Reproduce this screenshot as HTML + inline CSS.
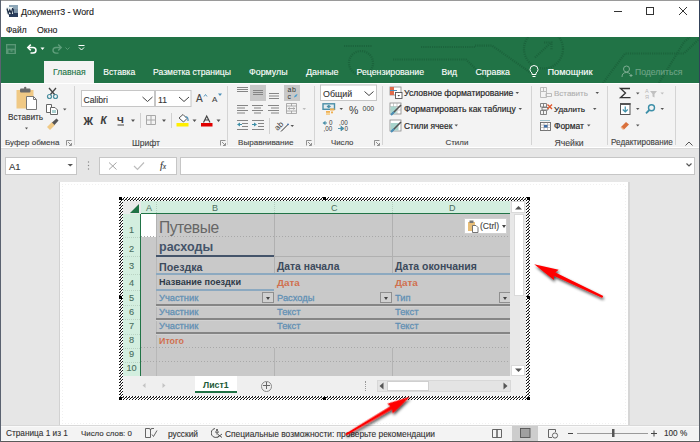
<!DOCTYPE html>
<html><head><meta charset="utf-8">
<style>
*{margin:0;padding:0;box-sizing:border-box}
html,body{width:700px;height:442px;overflow:hidden;background:#e6e6e6;font-family:"Liberation Sans",sans-serif;color:#262626}
.a{position:absolute}
.t{position:absolute;white-space:nowrap;line-height:1;-webkit-text-stroke:0.12px currentColor}
.bs{-webkit-text-stroke:0.18px currentColor}
#title{left:0;top:0;width:700px;height:37px;background:#fff}
#green{left:0;top:37px;width:700px;height:46px;background:#217346}
#ribbon{left:0;top:83px;width:700px;height:65px;background:#f3f3f3;border-top:1px solid #fff;border-bottom:1px solid #fff}
#fbar{left:0;top:148px;width:700px;height:34px;background:#e6e6e6;border-top:1px solid #d9d9d9}
#page{left:60px;top:182px;width:568px;height:243px;background:#fff}
#status{left:0;top:425px;width:700px;height:17px;background:#f3f3f3;border-top:1px solid #d9d9d9}
.tab{font-size:8.6px;color:#fff}
.rb{font-size:8.6px;color:#262626}
.grp{font-size:8.6px;color:#444}
.sep{position:absolute;width:1px;background:#d4d4d4}
.box{position:absolute;background:#fff;border:1px solid #c6c6c6}
.dd{position:absolute;width:0;height:0;border-left:2.5px solid transparent;border-right:2.5px solid transparent;border-top:3px solid #555}
.rh{left:123px;width:17px;text-align:center;font-size:9.2px;color:#4a6e60}
.hl{left:141px;width:369px;height:1px;background:repeating-linear-gradient(90deg,#a8a8a8 0 1px,transparent 1px 3px)}
.cb{font-size:9.3px;color:#6290b4;-webkit-text-stroke:0.3px currentColor}
.ddb{width:12px;height:11px;background:#d0d0d0;border:1px solid #8f8f8f}
.ddb::after{content:"";position:absolute;left:3px;top:4px;border-left:2.5px solid transparent;border-right:2.5px solid transparent;border-top:3px solid #444}
.hd{width:3px;height:3px;background:#000}
.st{font-size:8px;color:#333}
.ns{-webkit-text-stroke:0}
</style></head><body>
<!-- title bar -->
<div id="title" class="a"></div>
<div class="a" style="left:0;top:0;width:700px;height:1px;background:#9a9a9a"></div>
<svg class="a" style="left:5px;top:4px" width="15" height="14" viewBox="5 4 15 14">
<rect x="9" y="5" width="9" height="12" fill="#2a3d5c"/>
<rect x="9" y="5" width="9" height="4" fill="#8ea7b8"/>
<rect x="14" y="9" width="4" height="4" fill="#7f95a8"/>
<rect x="6.5" y="7" width="6.5" height="7" fill="#e8f0f0"/>
<path d="M7 8.5L8.3 13.3L9.8 10L11.3 13.3L12.8 8" fill="none" stroke="#1f2f48" stroke-width="1.3"/>
</svg>
<div class="t" style="left:21px;top:8px;font-size:8.85px;color:#222">Документ3 - Word</div>
<div class="t" style="left:6px;top:25.7px;font-size:8.4px;color:#222">Файл</div>
<div class="t" style="left:37px;top:25.5px;font-size:8.8px;color:#222">Окно</div>
<div class="a" style="left:614px;top:11px;width:8px;height:1px;background:#333"></div>
<div class="a" style="left:646px;top:7px;width:8px;height:8px;border:1px solid #333"></div>
<svg class="a" style="left:679px;top:7px" width="8" height="8"><path d="M0 0L8 8M8 0L0 8" stroke="#333" stroke-width="1"/></svg>

<!-- green band -->
<div id="green" class="a"></div>
<svg class="a" style="left:0;top:37px" width="700" height="46" viewBox="0 37 700 46">
<g fill="none" stroke="#1a5f39" stroke-width="2.2" stroke-dasharray="1.1 1.1" opacity="0.75">
<circle cx="543.5" cy="49" r="19.5"/>
<path d="M535 57.5L551 42.5M544 42.5H551.5V50"/>
<circle cx="361" cy="63" r="12"/>
<path d="M344 46H372"/>
<path d="M393 59.5H466L486 79"/>
<path d="M421 47H475M475 45.6H492L531 73"/>
<path d="M603 83L625 53.5H684L700 38"/>
<path d="M659 83L684 42L690 37"/>
</g>
</svg>
<svg class="a" style="left:529px;top:65px" width="10" height="13" viewBox="0 0 10 13">
<path d="M3 9.5V8Q1 6.5 1 4.5A4 4 0 0 1 9 4.5Q9 6.5 7 8V9.5ZM3.5 11.5H6.5" fill="none" stroke="#fff" stroke-width="1"/>
</svg>
<svg class="a" style="left:621px;top:65px" width="12" height="13" viewBox="0 0 12 13">
<circle cx="5.5" cy="4" r="3" fill="none" stroke="#7fae94" stroke-width="1"/>
<path d="M1 12Q1 7.5 5.5 7.5Q8 7.5 9 9M8.5 10.5H11.5M10 9V12" fill="none" stroke="#7fae94" stroke-width="1"/>
</svg>

<div class="a" style="left:44px;top:61px;width:50px;height:22px;background:#f3f3f3"></div>
<div class="t tab" style="left:53px;top:68px;color:#217346">Главная</div>
<div class="t tab" style="left:103.3px;top:68px">Вставка</div>
<div class="t tab" style="left:153px;top:68px">Разметка страницы</div>
<div class="t tab" style="left:249px;top:68px;font-size:8.9px">Формулы</div>
<div class="t tab" style="left:306px;top:68px;font-size:9px">Данные</div>
<div class="t tab" style="left:356.5px;top:68px;font-size:8.75px">Рецензирование</div>
<div class="t tab" style="left:441.5px;top:68px">Вид</div>
<div class="t tab" style="left:475.5px;top:68px;font-size:8.8px">Справка</div>
<div class="t tab" style="left:547.5px;top:67.8px;font-size:9.2px;-webkit-text-stroke:0.15px #fff">Помощник</div>
<div class="t tab" style="left:635px;top:68px;color:#6fa487">Поделиться</div>

<!-- ribbon -->
<div id="ribbon" class="a"></div>
<div class="t grp" style="left:5px;top:139px;font-size:8px">Буфер обмена</div>
<div class="t grp" style="left:132px;top:139px;font-size:8.5px">Шрифт</div>
<div class="t grp" style="left:238px;top:139px;font-size:8.07px">Выравнивание</div>
<div class="t grp" style="left:331px;top:139px;font-size:7.8px">Число</div>
<div class="t grp" style="left:445.5px;top:139px;font-size:7.95px">Стили</div>
<div class="t grp" style="left:554.5px;top:139px;font-size:8.66px">Ячейки</div>
<div class="t grp" style="left:611px;top:139px;font-size:8.14px">Редактирование</div>
<div class="sep" style="left:74px;top:86px;height:59px"></div>
<div class="sep" style="left:227px;top:86px;height:59px"></div>
<div class="sep" style="left:314px;top:86px;height:59px"></div>
<div class="sep" style="left:382px;top:86px;height:59px"></div>
<div class="sep" style="left:531px;top:86px;height:59px"></div>
<div class="sep" style="left:607px;top:86px;height:59px"></div>
<div class="sep" style="left:675px;top:86px;height:59px"></div>


<svg class="a" style="left:0;top:0" width="700" height="150" viewBox="0 0 700 150">
<!-- QAT -->
<rect x="6" y="44" width="10" height="10" fill="#5a9876"/>
<rect x="7.3" y="45.3" width="7.5" height="3.3" fill="#2c7750"/>
<rect x="8.5" y="50.2" width="6" height="2.8" fill="#2c7750"/>
<rect x="10.5" y="50.2" width="2" height="1.5" fill="#5a9876"/>
<path d="M28 47.5H33A3 2.8 0 0 1 33 53.1H30.5" fill="none" stroke="#fff" stroke-width="1.5"/>
<path d="M30.8 44.6L27.8 47.5L30.8 50.4" fill="none" stroke="#fff" stroke-width="1.5"/>
<path d="M40.5 47.5H44.5L42.5 50Z" fill="#fff"/>
<path d="M61 47.5H56A3 2.8 0 0 0 56 53.1H58.5" fill="none" stroke="#5f9e7b" stroke-width="1.4"/>
<path d="M58.2 44.6L61.2 47.5L58.2 50.4" fill="none" stroke="#5f9e7b" stroke-width="1.4"/>
<path d="M65.5 47.5L67.5 49.5L69.5 47.5" fill="none" stroke="#5f9e7b" stroke-width="0.9"/>
<path d="M78.5 45.5H84.5M79 47.5L81.5 50L84 47.5" fill="none" stroke="#fff" stroke-width="1"/>

<!-- clipboard group -->
<rect x="16.5" y="90" width="17" height="18.5" fill="#f0c985"/>
<rect x="20" y="88.5" width="10.5" height="4" rx="1" fill="#6b6b6b"/>
<circle cx="25.2" cy="88" r="1.2" fill="#6b6b6b"/>
<path d="M26.5 96.5H33.5L36.5 99.5V109.5H26.5Z" fill="#fff" stroke="#777" stroke-width="1"/>
<path d="M33.5 96.5V99.5H36.5" fill="none" stroke="#777" stroke-width="1"/>
<path d="M25 127.5H28L26.5 129.5Z" fill="#555"/>
<!-- scissors -->
<path d="M49 88L55 95M56 88L50 95" stroke="#444" stroke-width="1.3"/>
<circle cx="49.5" cy="96.5" r="2" fill="none" stroke="#4a8fa0" stroke-width="1.2"/>
<circle cx="55.5" cy="96.5" r="2" fill="none" stroke="#4a8fa0" stroke-width="1.2"/>
<!-- copy -->
<path d="M46.5 104.5H51.5V112.5H46.5Z" fill="#fff" stroke="#666"/>
<path d="M50.5 107.5H55L57.5 110V114.5H50.5Z" fill="#fff" stroke="#666"/>
<rect x="52" y="110" width="4" height="3" fill="#a8d0cf"/>
<path d="M63 108.5H66.5L64.75 110.5Z" fill="#555"/>
<!-- format painter -->
<path d="M47 127L52 122L55 125L50 130Z" fill="#f0c985"/>
<path d="M52 122.5L56.5 118.5L58.5 120.5L54.5 125Z" fill="#555"/>
<!-- font group -->
<rect x="81.5" y="90.5" width="73" height="16" fill="#fff" stroke="#c6c6c6"/>
<rect x="155.5" y="90.5" width="35.5" height="16" fill="#fff" stroke="#c6c6c6"/>
<path d="M142.5 97L147.5 101.5L152.5 97M179 97L184 101.5L189 97" fill="none" stroke="#444" stroke-width="1"/>
<path d="M204 96.5L205.5 94.5L207 96.5" fill="none" stroke="#4a8fb8" stroke-width="0.9"/>
<path d="M218 93.5H222L220 96Z" fill="#4a8fb8"/>
<path d="M131 119.5H135L133 122Z M162 119.5H166L164 122Z M192.5 119.5H196.5L194.5 122Z M216.5 119.5H220.5L218.5 122Z" fill="#555"/>
<rect x="140" y="113" width="1" height="15" fill="#d0d0d0"/>
<rect x="171" y="113" width="1" height="15" fill="#d0d0d0"/>
<path d="M146.5 115.5H155.5V124.5H146.5ZM151 115.5V124.5M146.5 120H155.5" fill="none" stroke="#a8a8a8" stroke-width="1"/>
<path d="M179 118L183 114.5L187 118.5L183.5 122L179 118Z" fill="#fff" stroke="#555" stroke-width="1"/>
<path d="M185.5 116.5Q188.5 117 188 121" fill="none" stroke="#4a8fb8" stroke-width="1.2"/>
<rect x="176.5" y="123" width="12" height="3.5" fill="#ffee00"/>
<rect x="201" y="123" width="11.5" height="3.5" fill="#e00000"/>
<path d="M203.5 122.5L206.7 116L210 122.5M204.7 120H208.7" fill="none" stroke="#444" stroke-width="1.2"/>
<rect x="117.5" y="124.5" width="6.5" height="1" fill="#444"/>
<!-- alignment -->
<rect x="250" y="85" width="16" height="16" fill="#c8c8c8"/>
<rect x="284" y="85" width="16" height="16" fill="#c8c8c8"/>
<g fill="#858585">
<rect x="237" y="87" width="11" height="1"/><rect x="237" y="89" width="11" height="1"/><rect x="237" y="91" width="11" height="1"/>
<rect x="253" y="90" width="10" height="1"/><rect x="253" y="92" width="10" height="1"/><rect x="253" y="94" width="10" height="1"/>
<rect x="269" y="93" width="10" height="1"/><rect x="269" y="95.5" width="10" height="1"/><rect x="269" y="98" width="10" height="1"/>
<rect x="237" y="105" width="11" height="1"/><rect x="237" y="107.5" width="8" height="1"/><rect x="237" y="110" width="11" height="1"/><rect x="237" y="112.5" width="8" height="1"/>
<rect x="252" y="105" width="11" height="1"/><rect x="254" y="107.5" width="7" height="1"/><rect x="252" y="110" width="11" height="1"/><rect x="254" y="112.5" width="7" height="1"/>
<rect x="268" y="105" width="11" height="1"/><rect x="271" y="107.5" width="8" height="1"/><rect x="268" y="110" width="11" height="1"/><rect x="271" y="112.5" width="8" height="1"/>
<rect x="237" y="120" width="11" height="1"/><rect x="242" y="123" width="6" height="1"/><rect x="242" y="126" width="6" height="1"/><rect x="237" y="129" width="11" height="1"/>
<rect x="252" y="120" width="12" height="1"/><rect x="258" y="123" width="6" height="1"/><rect x="258" y="126" width="6" height="1"/><rect x="252" y="129" width="12" height="1"/>
</g>
<path d="M237 124.5L240 122.5V126.5Z" fill="#3d8fa8"/><rect x="239" y="124" width="3" height="1" fill="#3d8fa8"/>
<path d="M257 124.5L254 122.5V126.5Z" fill="#3d8fa8"/><rect x="252" y="124" width="3" height="1" fill="#3d8fa8"/>
<text x="287.5" y="91.5" font-size="7" fill="#333" font-family="Liberation Sans" letter-spacing="0.6">ab</text>
<text x="287.5" y="98.5" font-size="7" fill="#333" font-family="Liberation Sans">c</text>
<path d="M294 97.5Q294.5 94.5 297.5 94Q297 97 294 97.5Z" fill="#4a9fd0"/>
<path d="M286.5 103.5H296.5V113.5H286.5ZM286.5 106H296.5M286.5 111H296.5M291.5 103.5V106M291.5 111V113.5" fill="none" stroke="#9a9a9a" stroke-width="0.8"/>
<path d="M288.5 108.5H294.5M289.5 107.5L288.3 108.5L289.5 109.5M293.5 107.5L294.7 108.5L293.5 109.5" fill="none" stroke="#8a8a8a" stroke-width="0.7"/>
<path d="M302.5 108H306L304.25 110Z" fill="#bbb"/>
<rect x="269" y="118" width="1" height="16" fill="#d0d0d0"/>
<text x="0" y="0" font-size="8" fill="#333" font-family="Liberation Sans" transform="translate(277.5 131) rotate(-45)">ab</text>
<path d="M281 131.5L288 124.5" stroke="#333" stroke-width="1"/><circle cx="288" cy="124.3" r="0.9" fill="#3d6ea8"/>
<path d="M290.5 125H294L292.25 127Z" fill="#555"/>
<!-- number -->
<rect x="320.5" y="85" width="56" height="15.5" fill="#fff" stroke="#c6c6c6"/>
<path d="M364.5 91.5L369 95.5L373.5 91.5" fill="none" stroke="#444" stroke-width="1"/>
<rect x="323" y="103.8" width="11.5" height="5.5" fill="#e4ecef" stroke="#4a8fa8" stroke-width="1.4"/>
<path d="M326.5 106.5L328.75 104.8L331 106.5L328.75 108.2Z" fill="#4a8fa8"/>
<rect x="330" y="108.5" width="4.5" height="2" fill="#f0b050"/><rect x="326" y="111" width="4" height="1.8" fill="#f0b050"/><rect x="331" y="111.5" width="2" height="1.8" fill="#f0b050"/><rect x="326" y="113.3" width="4" height="1.5" fill="#f5c878"/>
<path d="M339.5 108H343L341.25 110Z" fill="#555"/>
<text x="349" y="113.8" font-size="10.5" fill="#3a3a3a" font-family="Liberation Sans">%</text>
<text x="362.5" y="111" font-size="7" fill="#3a3a3a" font-family="Liberation Sans">000</text>
<text x="329" y="124.8" font-size="6.3" fill="#3a3a3a" font-family="Liberation Sans">0</text>
<text x="323.5" y="131.2" font-size="6.3" fill="#3a3a3a" font-family="Liberation Sans">,00</text>
<path d="M322.5 123L325.5 120.8V125.2Z" fill="#4a8fa8"/><rect x="325" y="122.5" width="2" height="1" fill="#4a8fa8"/>
<text x="339" y="124.8" font-size="6.3" fill="#3a3a3a" font-family="Liberation Sans">,00</text>
<text x="344.5" y="131.2" font-size="6.3" fill="#3a3a3a" font-family="Liberation Sans">0</text>
<path d="M338 128.5H341.5M344 128.5L341 126.3V130.7Z" fill="#4a8fa8" stroke="#4a8fa8" stroke-width="0.9"/>
<!-- styles -->
<g>
<rect x="390" y="87" width="11" height="8" fill="#fff" stroke="#888" stroke-width="0.8"/>
<rect x="390" y="87" width="4" height="8" fill="#e06c4c"/>
<rect x="390" y="90" width="7" height="1" fill="#4a8fb8"/>
<rect x="395.5" y="92.5" width="6.5" height="6" fill="#fff" stroke="#555" stroke-width="0.9"/>
<path d="M397.5 95H400L398.75 96.5Z" fill="#444"/>
<rect x="390" y="103" width="11" height="11" fill="#fff" stroke="#888" stroke-width="0.8"/>
<path d="M390 106.5H401M390 110H401M393.5 103V114M397 103V114" stroke="#aaa" stroke-width="0.6"/>
<rect x="390.5" y="106.5" width="6" height="7" fill="#a8d4cc"/>
<path d="M392 114L401 105" stroke="#555" stroke-width="1.6"/>
<path d="M391 115L394 112" stroke="#4a8fb8" stroke-width="2"/>
<rect x="390" y="120" width="11" height="11" fill="#fff" stroke="#888" stroke-width="0.8"/>
<rect x="390.5" y="123" width="8" height="7.5" fill="#a8d4cc"/>
<path d="M392 131L401 122" stroke="#555" stroke-width="1.6"/>
<path d="M391 132L394 129" stroke="#4a8fb8" stroke-width="2"/>
</g>
<path d="M515.5 92H519L517.25 94Z M518.5 108H522L520.25 110Z M454.5 124.5H458L456.25 126.5Z" fill="#555"/>
<!-- cells group -->
<g fill="none" stroke="#b5b5b5" stroke-width="0.9">
<path d="M540.5 87.5H546.5V91.5H540.5ZM540.5 91.5V97.5H546.5V91.5M543.5 87.5V91.5M546 93.5H551.5V96.5H546Z"/>
</g>
<g fill="none" stroke="#777" stroke-width="0.9">
<path d="M540.5 103.5H546.5V107H540.5ZM540.5 110.5H546.5V114.5H540.5ZM543.5 103.5V107M543.5 110.5V114.5M542 107.5H548V110H542Z"/>
</g>
<path d="M547.5 104.5L552 109M552 104.5L547.5 109" stroke="#e0562c" stroke-width="1.3"/>
<rect x="540.5" y="122.5" width="10" height="8" fill="#fff" stroke="#666" stroke-width="0.9"/>
<path d="M540.5 125H550.5M540.5 127.5H550.5M544 122.5V130.5M547.5 122.5V130.5" stroke="#999" stroke-width="0.6"/>
<rect x="544" y="125" width="3.5" height="2.5" fill="#3d6ea8"/>
<path d="M540.5 120.5H550.5" stroke="#4a8fa0" stroke-width="1" stroke-dasharray="1 1"/>
<path d="M595.5 92H599L597.25 94Z M593 108H596.5L594.75 110Z M587 124.5H590.5L588.75 126.5Z" fill="#555"/>
<!-- editing -->
<path d="M630 88.5H620.5L625.5 93L620.5 97.7H630.5" fill="none" stroke="#333" stroke-width="1.3"/>
<path d="M636 92.5H639.5L637.75 94.5Z M636 108H639.5L637.75 110Z M636 124.5H639.5L637.75 126.5Z" fill="#555"/>
<path d="M660.5 92.5H664L662.25 94.5Z" fill="#c0c0c0"/>
<path d="M660.5 108H664L662.25 110Z" fill="#555"/>
<text x="645" y="93" font-size="5.5" fill="#b8b8b8" font-family="Liberation Sans">А</text>
<text x="645" y="99" font-size="5.5" fill="#b8b8b8" font-family="Liberation Sans">Я</text>
<path d="M650 91H657L654.5 94V97.5L652.5 96.5V94Z" fill="#c0c0c0"/>
<rect x="620.5" y="103.5" width="9.5" height="11" fill="#fff" stroke="#555" stroke-width="1"/>
<rect x="620" y="103" width="10.5" height="2" fill="#555"/>
<path d="M625.25 106.5V112M622.75 109.5L625.25 112L627.75 109.5" fill="none" stroke="#3d8fa8" stroke-width="1.2"/>
<circle cx="651.5" cy="107.8" r="3" fill="none" stroke="#3d8fa8" stroke-width="1.4"/>
<path d="M649.3 110L646 113.3" stroke="#3d8fa8" stroke-width="1.8"/>
<path d="M621 127L626 122L629 124.5L624 129.5Z" fill="#d9703c"/>
<path d="M621 127L623.5 129.5" stroke="#f0b38a" stroke-width="1.3"/>
<path d="M685.5 145.5L689 142L692.5 145.5" fill="none" stroke="#555" stroke-width="1"/>
<!-- launchers -->
<g fill="none" stroke="#777" stroke-width="0.8">
<path d="M66.5 145.5V140.5H71.5M68 142L71 145M71.5 143V145.5H69"/>
<path d="M220.5 145.5V140.5H225.5M222 142L225 145M225.5 143V145.5H223"/>
<path d="M306.5 145.5V140.5H311.5M308 142L311 145M311.5 143V145.5H309"/>
<path d="M374.5 145.5V140.5H379.5M376 142L379 145M379.5 143V145.5H377"/>
</g>
</svg>


<div class="t" style="left:8px;top:113px;font-size:8.3px;color:#333">Вставить</div>
<div class="t" style="left:83.5px;top:95.5px;font-size:8.6px;color:#333">Calibri</div>
<div class="t" style="left:158px;top:95.5px;font-size:8.6px;color:#333">11</div>
<div class="t" style="left:196px;top:94px;font-size:10px;color:#444">A</div>
<div class="t" style="left:212px;top:96px;font-size:8px;color:#444">A</div>
<div class="t" style="left:83.5px;top:115.5px;font-size:10.5px;font-weight:bold;color:#3a3a3a">Ж</div>
<div class="t" style="left:100.5px;top:115.5px;font-size:10px;font-weight:bold;font-style:italic;color:#3a3a3a">К</div>
<div class="t" style="left:117px;top:114.8px;font-size:9.5px;font-weight:bold;color:#3a3a3a">Ч</div>
<div class="t" style="left:323px;top:89.5px;font-size:8.85px;color:#333">Общий</div>
<div class="t bs" style="left:404px;top:89px;font-size:8.6px;color:#262626">Условное форматирование</div>
<div class="t bs" style="left:404px;top:105px;font-size:8.6px;color:#262626">Форматировать как таблицу</div>
<div class="t bs" style="left:404px;top:121.5px;font-size:8.4px;color:#262626">Стили ячеек</div>
<div class="t" style="left:554px;top:89.5px;font-size:8px;color:#b0b0b0">Вставить</div>
<div class="t bs" style="left:554px;top:105.5px;font-size:8.1px;color:#262626">Удалить</div>
<div class="t bs" style="left:554px;top:121.5px;font-size:8.45px;color:#262626">Формат</div>

<!-- formula bar -->
<div id="fbar" class="a"></div>
<div class="box" style="left:5px;top:157px;width:72px;height:18px"></div>
<div class="t" style="left:9px;top:162px;font-size:9.5px;color:#333">A1</div>
<div class="box" style="left:99px;top:157px;width:78px;height:18px"></div>
<div class="box" style="left:180px;top:157px;width:515px;height:18px"></div>


<svg class="a" style="left:0;top:148px" width="700" height="34" viewBox="0 148 700 34">
<path d="M67.5 164H73L70.25 166.5Z" fill="#555"/>
<circle cx="88.5" cy="162" r="0.7" fill="#888"/><circle cx="88.5" cy="165.5" r="0.7" fill="#888"/><circle cx="88.5" cy="169" r="0.7" fill="#888"/>
<path d="M109 162.5L116.5 169.5M116.5 162.5L109 169.5" stroke="#a6a6a6" stroke-width="1"/>
<path d="M134 166L137.5 169.5L144 162.5" fill="none" stroke="#bdbdbd" stroke-width="1.2"/>
<path d="M686.5 163.5L689 166L691.5 163.5" fill="none" stroke="#555" stroke-width="1.2"/>
</svg>
<div class="t" style="left:160px;top:161px;font-size:10px;font-family:'Liberation Serif',serif;font-style:italic;color:#333">f<span style="font-size:7.5px">x</span></div>

<!-- page -->
<div id="page" class="a"></div>
<div class="a" style="left:59px;top:182px;width:1px;height:243px;background:#d2d2d2"></div>
<div class="a" style="left:628px;top:182px;width:2px;height:243px;background:#d6d6d6"></div>
<div class="a" style="left:62px;top:184px;width:564px;height:1px;background:repeating-linear-gradient(90deg,#f1f1f1 0 1px,transparent 1px 3px)"></div>
<div class="a" style="left:62px;top:423px;width:564px;height:1px;background:repeating-linear-gradient(90deg,#f1f1f1 0 1px,transparent 1px 3px)"></div>
<div class="a" style="left:62px;top:184px;width:1px;height:240px;background:repeating-linear-gradient(0deg,#f1f1f1 0 1px,transparent 1px 3px)"></div>
<div class="a" style="left:625px;top:184px;width:1px;height:240px;background:repeating-linear-gradient(0deg,#f1f1f1 0 1px,transparent 1px 3px)"></div>


<!-- embedded sheet -->
<svg class="a" style="left:119px;top:197px" width="411" height="203" shape-rendering="crispEdges"><defs><pattern id="hp" width="3" height="3" patternUnits="userSpaceOnUse"><rect width="3" height="3" fill="#fff"/><rect x="0" y="2" width="1" height="1" fill="#111"/><rect x="1" y="1" width="1" height="1" fill="#111"/><rect x="2" y="0" width="1" height="1" fill="#111"/><rect x="1" y="2" width="1" height="1" fill="#777"/></pattern></defs><rect width="411" height="203" fill="url(#hp)"/></svg>
<div class="a" style="left:123px;top:201px;width:403px;height:195px;background:#e8e8e8"></div>
<!-- corner -->
<div class="a" style="left:123px;top:201px;width:18px;height:13px;background:#e9e9e9"></div>
<svg class="a" style="left:130px;top:204px" width="10" height="9"><path d="M9 0V9H0Z" fill="#217346"/></svg>
<!-- col headers -->
<div class="a" style="left:141px;top:201px;width:369px;height:13px;background:#d3eedf;border-bottom:1px solid #217346"></div>
<div class="a" style="left:156px;top:202px;width:1px;height:11px;border-left:1px dotted #b5cfc0"></div>
<div class="a" style="left:274px;top:202px;width:1px;height:11px;border-left:1px dotted #b5cfc0"></div>
<div class="a" style="left:392px;top:202px;width:1px;height:11px;border-left:1px dotted #b5cfc0"></div>
<div class="t" style="left:146px;top:204px;font-size:9px;color:#4f6f62;-webkit-text-stroke:0">A</div>
<div class="t" style="left:212px;top:204px;font-size:9px;color:#4f6f62;-webkit-text-stroke:0">B</div>
<div class="t" style="left:331px;top:204px;font-size:9px;color:#4f6f62;-webkit-text-stroke:0">C</div>
<div class="t" style="left:449px;top:204px;font-size:9px;color:#4f6f62;-webkit-text-stroke:0">D</div>
<!-- row headers -->
<div class="a" style="left:123px;top:214px;width:18px;height:162px;background:#d3eedf;border-right:1.5px solid #217346"></div>
<div class="t rh" style="top:225.7px">1</div>
<div class="t rh" style="top:244.7px">2</div>
<div class="t rh" style="top:261.7px">3</div>
<div class="t rh" style="top:278.7px">4</div>
<div class="t rh" style="top:293.7px">5</div>
<div class="t rh" style="top:307.9px">6</div>
<div class="t rh" style="top:321.7px">7</div>
<div class="t rh" style="top:335.9px">8</div>
<div class="t rh" style="top:350.3px">9</div>
<div class="t rh" style="top:364.4px">10</div>
<div class="a" style="left:123px;top:237px;width:17px;height:1px;background:repeating-linear-gradient(90deg,#b9d2c3 0 1px,transparent 1px 2px)"></div><div class="a" style="left:123px;top:256px;width:17px;height:1px;background:repeating-linear-gradient(90deg,#b9d2c3 0 1px,transparent 1px 2px)"></div><div class="a" style="left:123px;top:274px;width:17px;height:1px;background:repeating-linear-gradient(90deg,#b9d2c3 0 1px,transparent 1px 2px)"></div><div class="a" style="left:123px;top:289.5px;width:17px;height:1px;background:repeating-linear-gradient(90deg,#b9d2c3 0 1px,transparent 1px 2px)"></div><div class="a" style="left:123px;top:304.5px;width:17px;height:1px;background:repeating-linear-gradient(90deg,#b9d2c3 0 1px,transparent 1px 2px)"></div><div class="a" style="left:123px;top:319px;width:17px;height:1px;background:repeating-linear-gradient(90deg,#b9d2c3 0 1px,transparent 1px 2px)"></div><div class="a" style="left:123px;top:333.5px;width:17px;height:1px;background:repeating-linear-gradient(90deg,#b9d2c3 0 1px,transparent 1px 2px)"></div><div class="a" style="left:123px;top:347.5px;width:17px;height:1px;background:repeating-linear-gradient(90deg,#b9d2c3 0 1px,transparent 1px 2px)"></div><div class="a" style="left:123px;top:362px;width:17px;height:1px;background:repeating-linear-gradient(90deg,#b9d2c3 0 1px,transparent 1px 2px)"></div>
<!-- cells -->
<div class="a" style="left:141px;top:214px;width:369px;height:162px;background:#c9c9c9"></div>
<div class="a" style="left:141px;top:214px;width:15px;height:23px;background:#fff"></div>
<div class="a" style="left:156px;top:214px;width:1px;height:42px;background:#b3b3b3"></div><div class="a" style="left:156px;top:256px;width:1px;height:120px;background:#b8b8b8"></div>
<div class="a" style="left:274px;top:214px;width:1px;height:60px;background:#b0b0b0"></div><div class="a" style="left:274px;top:348px;width:1px;height:28px;background:#b3b3b3"></div>
<div class="a" style="left:392px;top:214px;width:1px;height:60px;background:#b0b0b0"></div><div class="a" style="left:392px;top:348px;width:1px;height:28px;background:#b3b3b3"></div>
<div class="a hl" style="top:236px"></div>
<div class="a hl" style="top:347px"></div>
<div class="a hl" style="top:361px"></div>
<div class="a" style="left:274px;top:256px;width:236px;height:1px;background:#b0b0b0"></div>
<div class="a" style="left:156px;top:255px;width:118px;height:2px;background:#44546a"></div>
<div class="a" style="left:156px;top:273px;width:354px;height:2px;background:#8ca9c0"></div>
<div class="a" style="left:156px;top:289px;width:118px;height:1.5px;background:#8ca9c0"></div>
<div class="a" style="left:156px;top:303.5px;width:354px;height:2px;background:#858585"></div><div class="a" style="left:156px;top:305.5px;width:354px;height:1px;background:#d2d2d2"></div>
<div class="a" style="left:156px;top:318px;width:354px;height:2px;background:#858585"></div><div class="a" style="left:156px;top:320px;width:354px;height:1px;background:#d2d2d2"></div>
<div class="a" style="left:156px;top:332px;width:354px;height:2px;background:#858585"></div><div class="a" style="left:156px;top:334px;width:354px;height:1px;background:#d2d2d2"></div>
<div class="t ns" style="left:159px;top:220px;font-size:15.6px;letter-spacing:-0.45px;color:#666">Путевые</div>
<div class="t ns" style="left:159px;top:241px;font-size:12.5px;font-weight:bold;color:#44546a">расходы</div>
<div class="t ns" style="left:159px;top:262px;font-size:10.7px;font-weight:bold;color:#3c4a5c">Поездка</div>
<div class="t ns" style="left:277px;top:262px;font-size:10.3px;font-weight:bold;color:#3c4a5c">Дата начала</div>
<div class="t ns" style="left:395px;top:262px;font-size:10.45px;font-weight:bold;color:#3c4a5c">Дата окончания</div>
<div class="t ns" style="left:159px;top:278px;font-size:9.1px;font-weight:bold;color:#2f3a48">Название поездки</div>
<div class="t ns" style="left:277px;top:278px;font-size:9.9px;font-weight:bold;color:#d0704f">Дата</div>
<div class="t ns" style="left:395px;top:278px;font-size:9.9px;font-weight:bold;color:#d0704f">Дата</div>
<div class="t cb" style="left:159px;top:294px">Участник</div>
<div class="t cb" style="left:277px;top:294px">Расходы</div>
<div class="t cb" style="left:395px;top:294px">Тип</div>
<div class="t cb" style="left:159px;top:308px">Участник</div>
<div class="t cb" style="left:277px;top:308px">Текст</div>
<div class="t cb" style="left:395px;top:308px">Текст</div>
<div class="t cb" style="left:159px;top:322px">Участник</div>
<div class="t cb" style="left:277px;top:322px">Текст</div>
<div class="t cb" style="left:395px;top:322px">Текст</div>
<div class="t ns" style="left:159px;top:337px;font-size:8.9px;font-weight:bold;color:#d0704f">Итого</div>
<div class="a ddb" style="left:262px;top:292px"></div>
<div class="a ddb" style="left:380px;top:292px"></div>
<div class="a ddb" style="left:499px;top:292px"></div>
<!-- paste options -->
<div class="a" style="left:464px;top:218px;width:43px;height:16px;background:#fff;border:1px solid #d0d0d0"></div>
<svg class="a" style="left:466px;top:219px" width="14" height="14" viewBox="466 219 14 14">
<rect x="468" y="222" width="7" height="9" fill="#e8be78"/>
<rect x="469.5" y="220.5" width="4" height="2.5" fill="#777"/>
<path d="M472.5 225.5H476L478 227.5V232.5H472.5Z" fill="#fff" stroke="#666" stroke-width="0.9"/>
</svg>
<div class="t" style="left:480px;top:221.5px;font-size:8.6px;color:#444">(Ctrl)</div>
<div class="dd" style="left:502px;top:225px;border-top-color:#444"></div>
<!-- vscroll -->
<div class="a" style="left:510px;top:201px;width:16px;height:175px;background:#e8e8e8"></div>
<div class="a" style="left:514px;top:214px;width:10px;height:82px;background:#fff;border:1px solid #dadada"></div>
<div class="a" style="left:511px;top:201px;width:14px;height:12px;background:#fff;border:1px solid #dadada"></div><svg class="a" style="left:514px;top:205px" width="9" height="5"><path d="M1 4.5L4.5 1L8 4.5Z" fill="#555"/></svg>
<div class="a" style="left:511px;top:365px;width:14px;height:11px;background:#fff;border:1px solid #dadada"></div><svg class="a" style="left:514px;top:368px" width="9" height="5"><path d="M1 0.5L4.5 4L8 0.5Z" fill="#555"/></svg>
<!-- tab bar -->
<div class="a" style="left:123px;top:376px;width:403px;height:20px;background:#efefef"></div>
<svg class="a" style="left:140px;top:381px" width="30" height="9" viewBox="140 381 30 9"><path d="M145.5 383L142.5 385.5L145.5 388Z M162.5 383L165.5 385.5L162.5 388Z" fill="#c4c4c4"/></svg>
<div class="a" style="left:195px;top:376px;width:42px;height:17px;background:#fff;border-bottom:2px solid #217346"></div>
<div class="t ns" style="left:203px;top:381px;font-size:8.8px;font-weight:bold;color:#1d5a38">Лист1</div>
<div class="a" style="left:261px;top:380.5px;width:11px;height:11px;border:1px solid #8a8a8a;border-radius:50%"></div>
<div class="a" style="left:263px;top:385px;width:7px;height:1px;background:#666"></div>
<div class="a" style="left:266px;top:382px;width:1px;height:7px;background:#666"></div>
<div class="a" style="left:365px;top:381px;width:1px;height:10px;border-left:1px dotted #999"></div>
<div class="a" style="left:377px;top:380px;width:134px;height:12px;background:#e4e4e4;border:1px solid #d8d8d8"></div>
<div class="a" style="left:387px;top:381px;width:42px;height:10px;background:#fff;border:1px solid #cfcfcf"></div>
<svg class="a" style="left:379px;top:382px" width="5" height="8"><path d="M4.5 0.5L0.5 4L4.5 7.5Z" fill="#555"/></svg>
<svg class="a" style="left:503px;top:382px" width="5" height="8"><path d="M0.5 0.5L4.5 4L0.5 7.5Z" fill="#555"/></svg>
<!-- handles -->
<div class="a hd" style="left:119px;top:197px"></div>
<div class="a hd" style="left:323px;top:197px"></div>
<div class="a hd" style="left:527px;top:197px"></div>
<div class="a hd" style="left:119px;top:296px"></div>
<div class="a hd" style="left:527px;top:296px"></div>
<div class="a hd" style="left:119px;top:397px"></div>
<div class="a hd" style="left:323px;top:397px"></div>
<div class="a hd" style="left:527px;top:397px"></div>

<!-- status -->
<div id="status" class="a"></div><div class="a" style="left:0;top:426px;width:700px;height:1px;background:#fafafa"></div><div class="a" style="left:0;top:440px;width:700px;height:1px;background:#fafafa"></div>

<div class="t st" style="left:6px;top:429.5px;font-size:8.25px">Страница 1 из 1</div>
<div class="t st" style="left:81px;top:430px;font-size:7.9px">Число слов: 0</div>
<svg class="a" style="left:145px;top:428px" width="13" height="10" viewBox="0 0 13 10">
<path d="M0.5 0.5H4Q5.5 0.5 5.5 2V9.5H0.5ZM5.5 2Q5.5 0.5 7 0.5H9" fill="none" stroke="#555" stroke-width="0.9"/>
<path d="M7 6.5L8.5 8.5L12 2.5" fill="none" stroke="#555" stroke-width="0.9"/>
</svg>
<div class="t st" style="left:168px;top:430px;font-size:8.4px">русский</div>
<svg class="a" style="left:211px;top:428px" width="12" height="10" viewBox="0 0 12 10">
<path d="M4 0.5A4.5 4.5 0 1 0 8 8" fill="none" stroke="#444" stroke-width="0.9"/>
<circle cx="6" cy="2" r="1" fill="#444"/>
<path d="M4 4H8M6 4V6.5M6.5 6L11 9.5M11 6L6.5 9.5" fill="none" stroke="#444" stroke-width="0.9"/>
</svg>
<div class="t st" style="left:225px;top:430px;font-size:8.4px">Специальные возможности: проверьте рекомендации</div>
<div class="a" style="left:511.5px;top:426px;width:26.5px;height:15px;background:#cdcdcd"></div>
<svg class="a" style="left:490px;top:426px" width="210" height="15" viewBox="490 426 210 15">
<path d="M492.5 429.5H497V437.5H492.5ZM497 429.5H501.5V437.5H497Z" fill="none" stroke="#555" stroke-width="0.9"/>
<rect x="520.5" y="428.5" width="9.5" height="9" fill="#a0a0a0" stroke="#555" stroke-width="0.9"/>
<path d="M548.5 429.5H555.5V432M548.5 429.5V437.5H552" fill="none" stroke="#555" stroke-width="0.9"/>
<circle cx="555" cy="435.5" r="2.6" fill="none" stroke="#555" stroke-width="0.9"/>
<rect x="568" y="433" width="5" height="1" fill="#444"/>
<rect x="577" y="433" width="71" height="1" fill="#9a9a9a"/>
<rect x="612" y="429" width="2.5" height="8" fill="#555"/>
<rect x="651" y="433" width="6" height="1" fill="#444"/><rect x="653.5" y="430.5" width="1" height="6" fill="#444"/>
</svg>
<div class="t st" style="left:664px;top:430px;font-size:8.2px">100 %</div>
<div class="a" style="left:0;top:441px;width:700px;height:1px;background:#5a5a5a"></div>


<svg class="a" style="left:0;top:0" width="700" height="442" viewBox="0 0 700 442">
<defs><filter id="sh" x="-20%" y="-50%" width="140%" height="200%"><feGaussianBlur in="SourceAlpha" stdDeviation="1.6"/><feOffset dx="1" dy="1.5"/><feComponentTransfer><feFuncA type="linear" slope="0.75"/></feComponentTransfer><feMerge><feMergeNode/><feMergeNode in="SourceGraphic"/></feMerge></filter></defs>
<g filter="url(#sh)">
<path transform="translate(534.2 264.3) rotate(25.5)" d="M0 0L24.4 -5.6L22.6 -1.8L75.5 -1.1Q77 0 75.5 1.1L22.6 1.8L24.6 5.6Z" fill="#ff0000"/>
<path transform="translate(410 396.7) rotate(149.4)" d="M0 0L23.4 -5.5L21.8 -1.8L74 -1.1Q75.5 0 74 1.1L21.8 1.8L23 5.6Z" fill="#ff0000"/>
</g>
</svg>
<div class="a" style="left:0;top:0;width:1px;height:442px;background:#5a6270"></div>
<div class="a" style="left:699px;top:0;width:1px;height:83px;background:#34405a"></div><div class="a" style="left:699px;top:83px;width:1px;height:359px;background:#5a5f68"></div>
</body></html>
